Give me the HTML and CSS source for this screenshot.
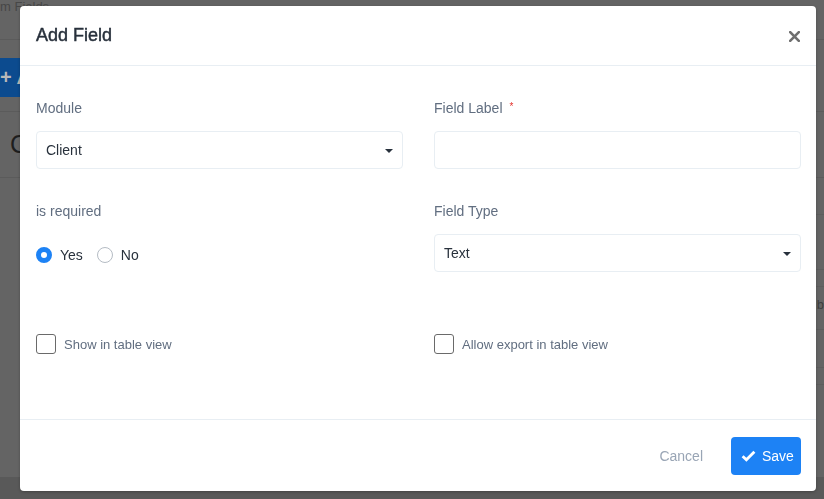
FILE: index.html
```html
<!DOCTYPE html>
<html lang="en">
<head>
<meta charset="utf-8">
<title>Add Field</title>
<link rel="stylesheet" href="styles.css">
</head>
<body>
<div class="page">
  <div class="topbar"><span class="crumb">m Fields</span></div>
  <div class="toolbar"><span class="btn-add">+ Add Field</span></div>
  <div class="page-row page-row-title"><span class="big">C</span></div>
  <div class="table">
    <div class="trow h36"></div>
    <div class="trow h55"></div>
    <div class="trow h17"></div>
    <div class="trow h43"><span class="cell">b</span></div>
    <div class="trow h38"></div>
    <div class="trow h17"></div>
  </div>
  <div class="filler"></div>
  <div class="page-footer"></div>
</div>

<div class="overlay">
  <div class="modal">
    <div class="modal-header">
      <h5 class="modal-title">Add Field</h5>
      <svg class="close" width="11" height="11" viewBox="0 0 11 11"><path d="M1.2 1.2 L9.8 9.8 M9.8 1.2 L1.2 9.8" stroke="#6f6f6f" stroke-width="2.6" stroke-linecap="square"/></svg>
    </div>
    <div class="modal-body">
      <div class="group">
        <div class="label">Module</div>
        <div class="select"><span>Client</span><i class="caret"></i></div>
      </div>
      <div class="group">
        <div class="label">Field Label <sup class="req">*</sup></div>
        <div class="input"></div>
      </div>
      <div class="group">
        <div class="label">is required</div>
        <div class="radios">
          <span class="radio checked"></span><span class="radio-text">Yes</span>
          <span class="radio"></span><span class="radio-text">No</span>
        </div>
      </div>
      <div class="group">
        <div class="label">Field Type</div>
        <div class="select"><span>Text</span><i class="caret"></i></div>
      </div>
      <div class="check-row">
        <span class="checkbox"></span><span class="check-text">Show in table view</span>
      </div>
      <div class="check-row">
        <span class="checkbox"></span><span class="check-text">Allow export in table view</span>
      </div>
    </div>
    <div class="modal-footer">
      <span class="cancel">Cancel</span>
      <span class="btn-save">
        <svg width="15" height="12" viewBox="0 0 15 12"><path d="M1.6 6.2 L5.4 9.8 L13.4 1.8" fill="none" stroke="#fff" stroke-width="2.8" stroke-linejoin="miter"/></svg>
        Save
      </span>
    </div>
  </div>
</div>
</body>
</html>
```
FILE: styles.css
```css
* { box-sizing: border-box; }
html, body { margin: 0; padding: 0; }
body {
  width: 824px;
  height: 499px;
  overflow: hidden;
  background: #646464;
  font-family: "Liberation Sans", Arial, sans-serif;
}

/* dimmed page behind the dialog */
.page {
  height: 499px;
  display: flex;
  flex-direction: column;
}
.topbar {
  height: 40px;
  border-bottom: 1px solid #5b5b5b;
  font-size: 13px;
  color: #474747;
  line-height: 13px;
}
.crumb { display: block; margin-top: 0; }
.toolbar {
  height: 72px;
  padding-top: 18px;
  border-bottom: 1px solid #5b5b5b;
}
.btn-add {
  display: inline-block;
  height: 39px;
  width: 140px;
  line-height: 39px;
  background: #0c4b8f;
  color: #b9b9b9;
  font-size: 20px;
  font-weight: bold;
}
.page-row-title {
  height: 66px;
  border-bottom: 1px solid #5b5b5b;
  display: flex;
  align-items: center;
}
.big { font-size: 25px; color: #1e1e1e; margin-left: 10px; }
.table { margin-left: 40px; }
.trow { border-bottom: 1px solid #5d5d5d; }
.h36 { height: 37px; }
.h55 { height: 55px; }
.h17 { height: 17px; }
.h43 { height: 43px; }
.h38 { height: 38px; }
.cell { display: block; text-align: right; font-size: 13px; color: #3e3e3e; padding-top: 10px; }
.filler { flex: 1; }
.page-footer { height: 22px; background: #595959; }

/* dialog */
.overlay {
  position: fixed;
  inset: 0;
}
.modal {
  width: 796px;
  margin: 6px 0 0 20px;
  background: #fff;
  border-radius: 4px;
  box-shadow: 0 1px 3px rgba(0,0,0,0.25);
  display: flex;
  flex-direction: column;
}
.modal-header {
  height: 60px;
  border-bottom: 1px solid #e8eef3;
  display: flex;
  align-items: center;
  justify-content: space-between;
  padding: 0 16px 0 16px;
}
.modal-title {
  margin: 0;
  font-size: 18px;
  font-weight: normal;
  -webkit-text-stroke: 0.45px #28313c;
  color: #28313c;
}
.close { display: block; margin-top: 2px; }

.modal-body {
  height: 353px;
  padding: 32px 15px 0 16px;
  display: grid;
  grid-template-columns: 1fr 1fr;
  column-gap: 31px;
  row-gap: 32px;
  align-content: start;
}
.label {
  font-size: 14px;
  line-height: 20px;
  color: #616e80;
  margin-bottom: 13px;
}
.req {
  color: #e3342f;
  font-size: 10px;
  margin-left: 3px;
  vertical-align: 3px;
  line-height: 0;
}
.select, .input {
  height: 38px;
  border: 1px solid #e8eef3;
  border-radius: 4px;
  display: flex;
  align-items: center;
  justify-content: space-between;
  padding: 0 9px 0 9px;
  font-size: 14px;
  color: #28313c;
}
.caret {
  width: 0;
  height: 0;
  border-left: 4px solid transparent;
  border-right: 4px solid transparent;
  border-top: 4px solid #28313c;
  margin-top: 1px;
}
.radios {
  height: 38px;
  display: flex;
  align-items: center;
  padding-top: 3px;
  font-size: 14px;
  color: #28313c;
}
.radio {
  width: 16px;
  height: 16px;
  border-radius: 50%;
  border: 1px solid #b5bcc4;
  background: #fff;
}
.radio.checked { border: 5px solid #1d82f5; }
.radio-text { margin: 0 14px 0 8px; }

.check-row {
  margin-top: 30px;
  display: flex;
  align-items: center;
  height: 20px;
}
.checkbox {
  width: 20px;
  height: 20px;
  border: 1px solid #6a6a6a;
  border-radius: 3px;
}
.check-text {
  margin-left: 8px;
  font-size: 13px;
  color: #616e80;
}

.modal-footer {
  height: 72px;
  border-top: 1px solid #e8eef3;
  display: flex;
  align-items: center;
  justify-content: flex-end;
  padding: 0 15px 0 16px;
}
.cancel {
  font-size: 14px;
  color: #99a5b5;
  margin-right: 28px;
}
.btn-save {
  height: 38px;
  width: 70px;
  background: #1d82f5;
  border-radius: 4px;
  color: #fff;
  font-size: 14px;
  display: flex;
  align-items: center;
  gap: 6px;
  padding-left: 10px;
}
```
